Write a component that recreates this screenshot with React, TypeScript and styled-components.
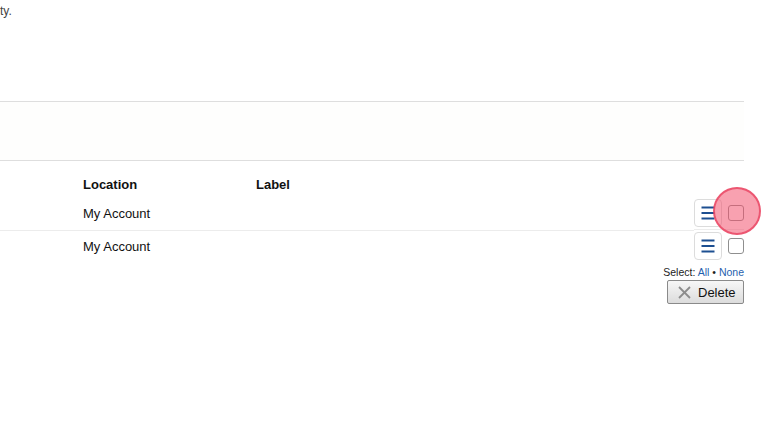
import React from "react";
import styled, { createGlobalStyle } from "styled-components";

const Global = createGlobalStyle`
  html, body { margin: 0; padding: 0; background: #fff; }
  body { width: 764px; height: 426px; overflow: hidden; font-family: "Liberation Sans", Arial, sans-serif; color: #222; }
`;

const Page = styled.div`
  width: 744px;
  padding-right: 20px;
`;

const Intro = styled.p`
  margin: 0;
  padding-top: 4px;
  font-size: 12px;
  line-height: 14px;
  color: #444;
  border-bottom: 1px solid #dedede;
  box-sizing: border-box;
  height: 102px;
`;

const Band = styled.div`
  height: 58px;
  background: #fefefd;
  border-bottom: 1px solid #dedede;
`;

const Table = styled.div`
  display: grid;
  grid-template-columns: 83px 173px 1fr auto;
  margin-top: 11px;
`;

const HeadCell = styled.div`
  font-weight: bold;
  font-size: 13px;
  height: 26px;
  line-height: 26px;
  color: #111;
`;

const Row = styled.div<{ $last?: boolean }>`
  display: contents;
  & > * {
    border-bottom: ${(p) => (p.$last ? "none" : "1px solid #ececec")};
  }
`;

const Cell = styled.div`
  font-size: 13px;
  height: 32px;
  line-height: 32px;
  color: #111;
`;

const Actions = styled.div`
  position: relative;
  height: 32px;
  display: flex;
  align-items: flex-start;
  gap: 6px;
  padding-top: 1px;
  box-sizing: border-box;
`;

const MenuButton = styled.button`
  width: 28px;
  height: 28px;
  box-sizing: border-box;
  border: 1px solid #dcdcdc;
  border-radius: 4px;
  background: #fff;
  padding: 0;
  display: flex;
  align-items: center;
  justify-content: center;
`;

const Check = styled.span`
  margin-top: 6px;
  width: 16px;
  height: 16px;
  box-sizing: border-box;
  border: 1px solid #8f8f8f;
  border-radius: 3px;
  background: #fff;
`;

const Highlight = styled.span`
  position: absolute;
  right: -17px;
  top: -11px;
  width: 48px;
  height: 48px;
  box-sizing: border-box;
  border-radius: 50%;
  background: rgba(243, 84, 112, 0.55);
  border: 2px solid rgba(232, 62, 92, 0.75);
`;

const Footer = styled.div`
  display: flex;
  flex-direction: column;
  align-items: flex-end;
  margin-top: 3px;
`;

const SelectLine = styled.div`
  font-size: 10.5px;
  line-height: 12px;
  color: #222;
`;

const SelLink = styled.a`
  color: #1f5fae;
  text-decoration: none;
`;

const DeleteButton = styled.button`
  margin-top: 2px;
  width: 77px;
  height: 24px;
  box-sizing: border-box;
  border: 1px solid #8a8a8a;
  border-radius: 2px;
  background: linear-gradient(#f7f7f7, #dcdcdc);
  display: flex;
  align-items: center;
  gap: 7px;
  padding: 0 0 0 10px;
  font-family: "Liberation Sans", Arial, sans-serif;
  font-size: 13px;
  color: #111;
`;

const MenuIcon = () => (
  <svg width="14" height="14" viewBox="0 0 14 14">
    <g stroke="#1d4f91" strokeWidth="2" strokeLinecap="butt">
      <line x1="0.5" y1="1.5" x2="13.5" y2="1.5" />
      <line x1="0.5" y1="7" x2="13.5" y2="7" />
      <line x1="0.5" y1="12.5" x2="13.5" y2="12.5" />
    </g>
  </svg>
);

const XIcon = () => (
  <svg width="13" height="13" viewBox="0 0 13 13">
    <g stroke="#8c8c8c" strokeWidth="1.8">
      <line x1="1" y1="1" x2="12" y2="12" />
      <line x1="12" y1="1" x2="1" y2="12" />
    </g>
  </svg>
);

export default function App() {
  const rows = ["My Account", "My Account"];
  return (
    <Page>
      <Global />
      <Intro>ty.</Intro>
      <Band />
      <Table>
        <HeadCell />
        <HeadCell>Location</HeadCell>
        <HeadCell>Label</HeadCell>
        <HeadCell />
        {rows.map((r, i) => (
          <Row key={i} $last={i === rows.length - 1}>
            <Cell />
            <Cell>{r}</Cell>
            <Cell />
            <Actions>
              <MenuButton>
                <MenuIcon />
              </MenuButton>
              <Check />
              {i === 0 && <Highlight />}
            </Actions>
          </Row>
        ))}
      </Table>
      <Footer>
        <SelectLine>
          Select: <SelLink>All</SelLink> • <SelLink>None</SelLink>
        </SelectLine>
        <DeleteButton>
          <XIcon />
          Delete
        </DeleteButton>
      </Footer>
    </Page>
  );
}
